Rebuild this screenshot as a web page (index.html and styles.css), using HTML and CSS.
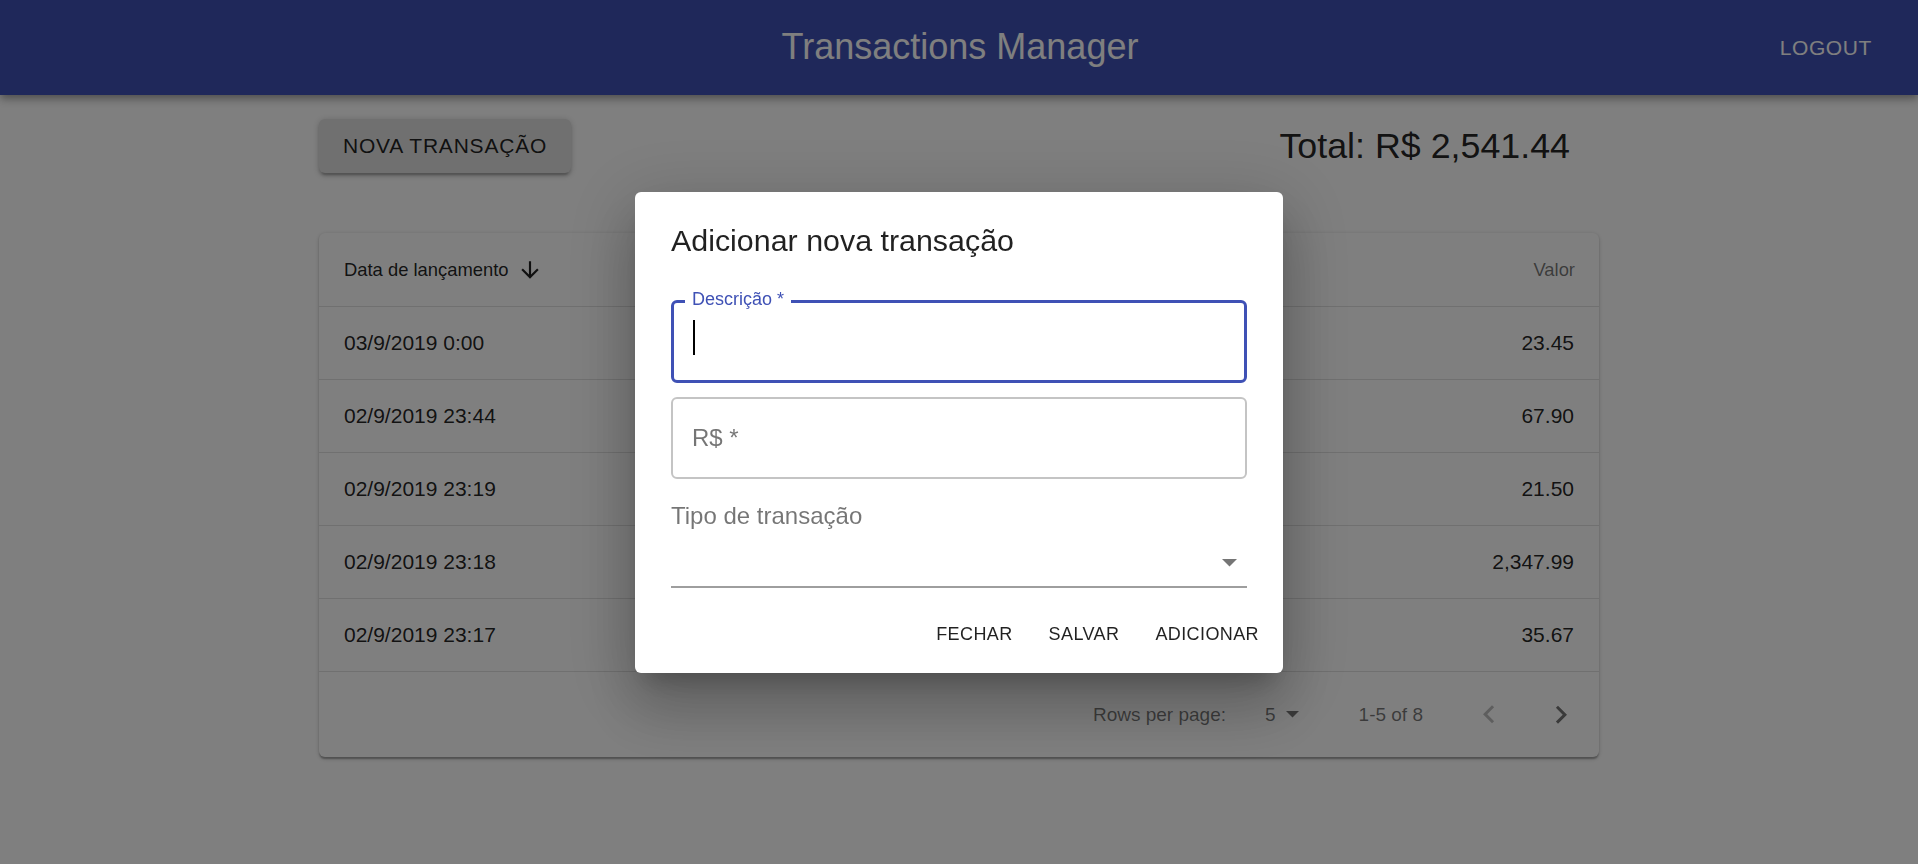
FILE: index.html
```html
<!DOCTYPE html>
<html lang="pt-BR">
<head>
<meta charset="utf-8">
<title>Transactions Manager</title>
<link rel="stylesheet" href="styles.css">
</head>
<body>
<header class="appbar">
  <div class="appbar-side"></div>
  <h1 class="appbar-title">Transactions Manager</h1>
  <button class="appbar-logout">LOGOUT</button>
</header>

<main class="container">
  <div class="toolbar">
    <button class="btn-raised">NOVA TRANSAÇÃO</button>
    <div class="total">Total: R$ 2,541.44</div>
  </div>

  <section class="card">
    <div class="row row-head">
      <div class="cell cell-sorted">Data de lançamento
        <svg class="sort-icon" viewBox="0 0 24 24" width="26" height="26"><path d="M20 12l-1.41-1.41L13 16.170V4h-2v12.17l-5.58-5.59L4 12l8 8 8-8z"/></svg>
      </div>
      <div class="cell head-muted">Valor</div>
    </div>
    <div class="row"><div class="cell">03/9/2019 0:00</div><div class="cell">23.45</div></div>
    <div class="row"><div class="cell">02/9/2019 23:44</div><div class="cell">67.90</div></div>
    <div class="row"><div class="cell">02/9/2019 23:19</div><div class="cell">21.50</div></div>
    <div class="row"><div class="cell">02/9/2019 23:18</div><div class="cell">2,347.99</div></div>
    <div class="row"><div class="cell">02/9/2019 23:17</div><div class="cell">35.67</div></div>

    <div class="pagination">
      <span class="rows-label">Rows per page:</span>
      <div class="rows-select">
        <span>5</span>
        <svg class="drop-small" viewBox="0 0 10 5" width="13" height="6.5"><path d="M0 0L5 5L10 0Z"/></svg>
      </div>
      <span class="range">1-5 of 8</span>
      <div class="page-actions">
        <button class="icon-btn disabled"><svg viewBox="0 0 24 24" width="36" height="36"><path d="M15.41 16.09l-4.58-4.59 4.58-4.59L14 5.5l-6 6 6 6z"/></svg></button>
        <button class="icon-btn"><svg viewBox="0 0 24 24" width="36" height="36"><path d="M8.59 16.34l4.58-4.59-4.58-4.59L10 5.75l6 6-6 6z"/></svg></button>
      </div>
    </div>
  </section>
</main>

<div class="backdrop">
  <div class="dialog">
    <h2 class="dialog-title">Adicionar nova transação</h2>
    <div class="dialog-content">
      <div class="outlined focused">
        <span class="notch-label">Descrição *</span>
        <span class="caret"></span>
      </div>
      <div class="outlined">
        <span class="placeholder">R$ *</span>
      </div>
      <div class="select-label">Tipo de transação</div>
      <div class="select-input">
        <svg class="drop" viewBox="0 0 10 5" width="15" height="7.5"><path d="M0 0L5 5L10 0Z"/></svg>
      </div>
    </div>
    <div class="dialog-actions">
      <button class="dialog-btn">FECHAR</button>
      <button class="dialog-btn">SALVAR</button>
      <button class="dialog-btn">ADICIONAR</button>
    </div>
  </div>
</div>
</body>
</html>
```

FILE: styles.css
```css
* { box-sizing: border-box; }

html, body {
  margin: 0;
  padding: 0;
}

body {
  font-family: "Liberation Sans", Arial, sans-serif;
  background: #fff;
  color: rgba(0, 0, 0, 0.87);
  width: 1918px;
  height: 864px;
  overflow: hidden;
}

button {
  font-family: inherit;
  border: 0;
  background: none;
  padding: 0;
  color: inherit;
  cursor: pointer;
}

/* App bar */
.appbar {
  position: relative;
  z-index: 1;
  height: 95px;
  background: #3f51b5;
  color: #fff;
  display: grid;
  grid-template-columns: 1fr auto 1fr;
  align-items: center;
  padding: 0 34px 0 36px;
  box-shadow: 0 3px 6px -1.5px rgba(0, 0, 0, 0.2),
              0 6px 7.5px 0 rgba(0, 0, 0, 0.14),
              0 1.5px 15px 0 rgba(0, 0, 0, 0.12);
}

.appbar-title {
  margin: 0;
  font-size: 36px;
  font-weight: 400;
  line-height: 1.3;
}

.appbar-logout {
  justify-self: end;
  font-size: 21px;
  letter-spacing: 0.6px;
  padding: 12px;
  color: #fff;
}

/* Main */
.container {
  width: 1280px;
  margin: 0 auto;
  padding-top: 24px;
}

.toolbar {
  display: flex;
  align-items: center;
  justify-content: space-between;
}

.btn-raised {
  height: 54px;
  padding: 0 24px;
  font-size: 21px;
  letter-spacing: 0.8px;
  background: #e0e0e0;
  border-radius: 6px;
  color: rgba(0, 0, 0, 0.87);
  box-shadow: 0 1.5px 7.5px 0 rgba(0, 0, 0, 0.2),
              0 3px 3px 0 rgba(0, 0, 0, 0.14),
              0 4.5px 1.5px -3px rgba(0, 0, 0, 0.12);
}

.total {
  font-size: 35.8px;
  padding-right: 29px;
  color: rgba(0, 0, 0, 0.87);
}

.card {
  margin-top: 60px;
  background: #fff;
  border-radius: 6px;
  overflow: hidden;
  box-shadow: 0 1.5px 4.5px 0 rgba(0, 0, 0, 0.2),
              0 1.5px 1.5px 0 rgba(0, 0, 0, 0.14),
              0 3px 1.5px -1.5px rgba(0, 0, 0, 0.12);
}

.row {
  display: flex;
  align-items: center;
  justify-content: space-between;
  height: 73px;
  padding: 0 25px 0 25px;
  border-bottom: 1px solid #e0e0e0;
  font-size: 21px;
  color: rgba(0, 0, 0, 0.87);
}

.row-head {
  height: 74px;
  font-size: 18.4px;
  padding-right: 24px;
}

.cell-sorted {
  display: flex;
  align-items: center;
}

.sort-icon {
  margin-left: 8px;
  fill: rgba(0, 0, 0, 0.87);
}

.head-muted {
  color: rgba(0, 0, 0, 0.54);
}

.pagination {
  height: 85px;
  display: flex;
  align-items: center;
  justify-content: flex-end;
  padding-right: 2px;
  font-size: 19px;
  color: rgba(0, 0, 0, 0.54);
}

.rows-select {
  display: flex;
  align-items: center;
  margin-left: 39px;
  margin-right: 60px;
}

.drop-small {
  margin-left: 10px;
  fill: rgba(0, 0, 0, 0.54);
}

.page-actions {
  display: flex;
  margin-left: 30px;
}

.icon-btn {
  width: 72px;
  height: 72px;
  display: flex;
  align-items: center;
  justify-content: center;
  border-radius: 50%;
}

.icon-btn svg { fill: rgba(0, 0, 0, 0.54); }
.icon-btn.disabled svg { fill: rgba(0, 0, 0, 0.26); }

/* Modal */
.backdrop {
  position: fixed;
  inset: 0;
  z-index: 10;
  background: rgba(0, 0, 0, 0.5);
  display: flex;
  align-items: center;
  justify-content: center;
}

.dialog {
  width: 648px;
  background: #fff;
  border-radius: 6px;
  padding: 24px 0 11px;
  box-shadow: 0 16.5px 22.5px -10.5px rgba(0, 0, 0, 0.22),
              0 36px 57px 4.5px rgba(0, 0, 0, 0.16),
              0 13.5px 69px 12px rgba(0, 0, 0, 0.14);
}

.dialog-title {
  margin: 0;
  padding: 0 36px;
  font-size: 30.4px;
  font-weight: 400;
  line-height: 48px;
  color: rgba(0, 0, 0, 0.87);
}

.dialog-content {
  padding: 36px 36px 0;
}

.outlined {
  position: relative;
  height: 82px;
  border: 2px solid #c4c4c4;
  border-radius: 6px;
  display: flex;
  align-items: center;
  padding-left: 19px;
}

.outlined.focused {
  height: 83px;
  border: 3px solid #3f51b5;
  margin-bottom: 14px;
}

.notch-label {
  position: absolute;
  left: 11px;
  top: -13px;
  padding: 0 7px;
  background: #fff;
  font-size: 18px;
  line-height: 18px;
  color: #3f51b5;
}

.caret {
  position: absolute;
  left: 19px;
  top: 17px;
  width: 2px;
  height: 35px;
  background: #000;
}

.placeholder {
  font-size: 24px;
  color: rgba(0, 0, 0, 0.54);
}

.select-label {
  margin-top: 23px;
  font-size: 24px;
  line-height: 28px;
  color: rgba(0, 0, 0, 0.54);
}

.select-input {
  height: 58px;
  border-bottom: 2px solid rgba(0, 0, 0, 0.38);
  display: flex;
  justify-content: flex-end;
  align-items: flex-end;
  padding: 0 10px 19px 0;
}

.drop { fill: rgba(0, 0, 0, 0.54); }

.dialog-actions {
  display: flex;
  justify-content: flex-end;
  gap: 12px;
  margin-top: 20px;
  padding: 0 12px;
}

.dialog-btn {
  height: 54px;
  padding: 0 12px;
  font-size: 18px;
  letter-spacing: 0.4px;
  color: rgba(0, 0, 0, 0.87);
  border-radius: 6px;
}
```
